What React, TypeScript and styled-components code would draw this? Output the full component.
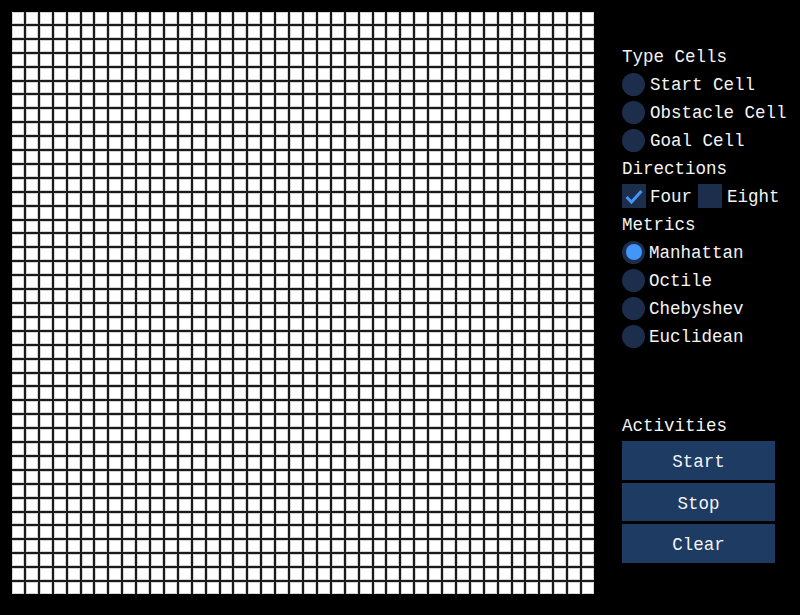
import React, { useState } from "react";
import styled, { createGlobalStyle } from "styled-components";

const GlobalStyle = createGlobalStyle`
  html, body {
    margin: 0;
    padding: 0;
    background: #000;
  }
  body {
    font-family: "Liberation Mono", "DejaVu Sans Mono", monospace;
    color: #fff;
  }
`;

const COLS = 42;
const ROWS = 42;

const Page = styled.div`
  width: 800px;
  height: 615px;
  box-sizing: border-box;
  padding: 12px 0 0 12px;
  display: flex;
  align-items: flex-start;
  background: #000;
  overflow: hidden;
`;

const Board = styled.div`
  width: 582px;
  height: 582px;
  display: grid;
  grid-template-columns: repeat(${COLS}, 1fr);
  grid-template-rows: repeat(${ROWS}, 1fr);
  gap: 2px;
  background: #1a1a1a;
`;

const Cell = styled.div`
  background: #ffffff;
  box-shadow: inset 0 0 0 1px #d4d4d4;
`;

const Panel = styled.div`
  margin-left: 28px;
  padding-top: 30px;
  width: 160px;
  display: flex;
  flex-direction: column;
  font-size: 17.5px;
  line-height: 1;
  white-space: nowrap;
`;

const Row = styled.div<{ $top?: number }>`
  height: 28px;
  display: flex;
  align-items: center;
  margin-top: ${(p) => p.$top ?? 0}px;
`;

const Label = styled.span`
  display: block;
  color: #f4f4f4;
  padding-top: 4px;
`;

const Option = styled.label<{ $gap?: number }>`
  display: inline-flex;
  align-items: center;
  gap: ${(p) => p.$gap ?? 5}px;
  cursor: pointer;
`;

const RadioDot = styled.span<{ $on?: boolean }>`
  width: 23px;
  height: 23px;
  border-radius: 50%;
  background: #1c2e4c;
  display: inline-flex;
  align-items: center;
  justify-content: center;
  flex: none;
  &::after {
    content: "";
    width: 16px;
    height: 16px;
    border-radius: 50%;
    background: #4296fa;
    display: ${(p) => (p.$on ? "block" : "none")};
  }
`;

const CheckBox = styled.span`
  width: 24px;
  height: 24px;
  background: #1c2e4c;
  display: inline-flex;
  align-items: center;
  justify-content: center;
  flex: none;
`;

const CheckRow = styled.div`
  display: flex;
  align-items: center;
  gap: 6px;
`;

const Buttons = styled.div`
  margin-top: 2px;
  display: flex;
  flex-direction: column;
  gap: 3px;
  width: 153px;
`;

const Button = styled.button`
  height: 38.5px;
  width: 153px;
  border: none;
  background: #1d3b63;
  color: #f4f4f4;
  font-family: inherit;
  font-size: 17.5px;
  padding: 4px 0 0;
  cursor: pointer;
`;

const Check = () => (
  <svg width="24" height="24" viewBox="0 0 24 24">
    <path d="M4.5 13 L9.5 18 L19.5 7" fill="none" stroke="#4296fa" strokeWidth="3" />
  </svg>
);

export default function App() {
  const [cellType, setCellType] = useState<string | null>(null);
  const [four, setFour] = useState(true);
  const [eight, setEight] = useState(false);
  const [metric, setMetric] = useState("Manhattan");

  const cells = Array.from({ length: COLS * ROWS }, (_, i) => <Cell key={i} />);

  return (
    <>
      <GlobalStyle />
      <Page>
        <Board>{cells}</Board>
        <Panel>
          <Row>
            <Label>Type Cells</Label>
          </Row>
          {["Start Cell", "Obstacle Cell", "Goal Cell"].map((t) => (
            <Row key={t}>
              <Option onClick={() => setCellType(t)}>
                <RadioDot $on={cellType === t} />
                <Label>{t}</Label>
              </Option>
            </Row>
          ))}
          <Row>
            <Label>Directions</Label>
          </Row>
          <Row>
            <CheckRow>
              <Option $gap={4} onClick={() => setFour(!four)}>
                <CheckBox>{four && <Check />}</CheckBox>
                <Label>Four</Label>
              </Option>
              <Option $gap={5} onClick={() => setEight(!eight)}>
                <CheckBox>{eight && <Check />}</CheckBox>
                <Label>Eight</Label>
              </Option>
            </CheckRow>
          </Row>
          <Row>
            <Label>Metrics</Label>
          </Row>
          {["Manhattan", "Octile", "Chebyshev", "Euclidean"].map((t) => (
            <Row key={t}>
              <Option $gap={4} onClick={() => setMetric(t)}>
                <RadioDot $on={metric === t} />
                <Label>{t}</Label>
              </Option>
            </Row>
          ))}
          <Row $top={61}>
            <Label>Activities</Label>
          </Row>
          <Buttons>
            <Button>Start</Button>
            <Button>Stop</Button>
            <Button>Clear</Button>
          </Buttons>
        </Panel>
      </Page>
    </>
  );
}
